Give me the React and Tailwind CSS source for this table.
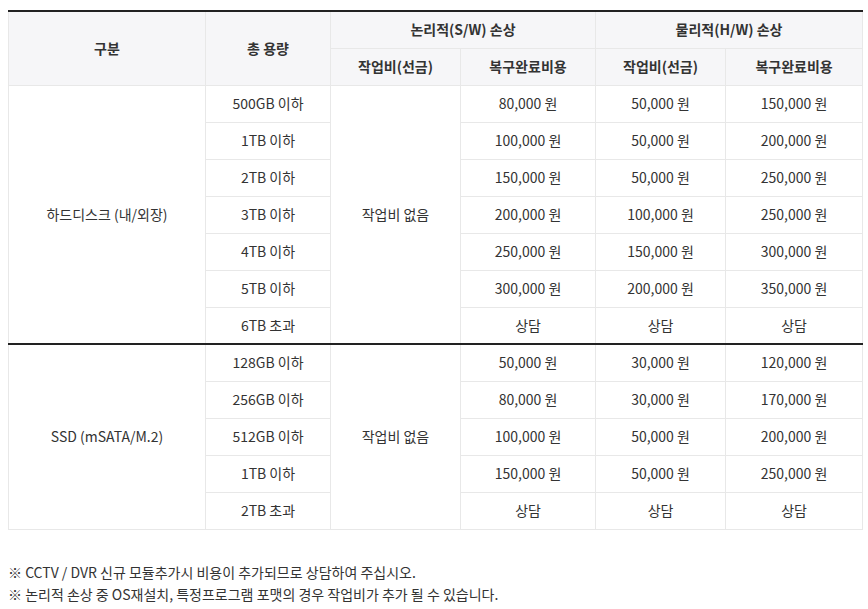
import React from 'react';

const hdd = [
  ['500GB 이하', '80,000 원', '50,000 원', '150,000 원'],
  ['1TB 이하', '100,000 원', '50,000 원', '200,000 원'],
  ['2TB 이하', '150,000 원', '50,000 원', '250,000 원'],
  ['3TB 이하', '200,000 원', '100,000 원', '250,000 원'],
  ['4TB 이하', '250,000 원', '150,000 원', '300,000 원'],
  ['5TB 이하', '300,000 원', '200,000 원', '350,000 원'],
  ['6TB 초과', '상담', '상담', '상담'],
];

const ssd = [
  ['128GB 이하', '50,000 원', '30,000 원', '120,000 원'],
  ['256GB 이하', '80,000 원', '30,000 원', '170,000 원'],
  ['512GB 이하', '100,000 원', '50,000 원', '200,000 원'],
  ['1TB 이하', '150,000 원', '50,000 원', '250,000 원'],
  ['2TB 초과', '상담', '상담', '상담'],
];

const td = 'border border-[#e8e8e8] text-center font-normal';
const th = 'border border-[#e8e8e8] bg-[#f6f6f8] text-center font-bold';

const Group = ({ label, rows, divider }) => (
  <tbody className={divider ? 'border-t-2 border-t-[#222]' : ''}>
    {rows.map((r, i) => (
      <tr key={r[0]} className="h-[37px]">
        {i === 0 && (
          <td rowSpan={rows.length} className={td}>{label}</td>
        )}
        <td className={td}>{r[0]}</td>
        {i === 0 && (
          <td rowSpan={rows.length} className={td}>작업비 없음</td>
        )}
        <td className={td}>{r[1]}</td>
        <td className={td}>{r[2]}</td>
        <td className={td}>{r[3]}</td>
      </tr>
    ))}
  </tbody>
);

export default function App() {
  return (
    <div
      className="bg-white px-2 pt-[10px] text-[14px] text-[#333] min-h-[609px]"
      style={{ fontFamily: '"Noto Sans CJK KR", "Noto Sans", sans-serif' }}
    >
      <table className="w-[854px] border-collapse table-fixed border-t-2 border-t-[#222]">
        <colgroup>
          <col className="w-[197px]" />
          <col className="w-[125px]" />
          <col className="w-[130px]" />
          <col className="w-[135px]" />
          <col className="w-[130px]" />
          <col className="w-[137px]" />
        </colgroup>
        <thead>
          <tr className="h-[37px]">
            <th rowSpan={2} className={th}>구분</th>
            <th rowSpan={2} className={th}>총 용량</th>
            <th colSpan={2} className={th}>논리적(S/W) 손상</th>
            <th colSpan={2} className={th}>물리적(H/W) 손상</th>
          </tr>
          <tr className="h-[37px]">
            <th className={th}>작업비(선금)</th>
            <th className={th}>복구완료비용</th>
            <th className={th}>작업비(선금)</th>
            <th className={th}>복구완료비용</th>
          </tr>
        </thead>
        <Group label="하드디스크 (내/외장)" rows={hdd} />
        <Group label="SSD (mSATA/M.2)" rows={ssd} divider />
      </table>
      <div className="mt-[31px] leading-[22px]">
        <p>※ CCTV / DVR 신규 모듈추가시 비용이 추가되므로 상담하여 주십시오.</p>
        <p>※ 논리적 손상 중 OS재설치, 특정프로그램 포맷의 경우 작업비가 추가 될 수 있습니다.</p>
      </div>
    </div>
  );
}
